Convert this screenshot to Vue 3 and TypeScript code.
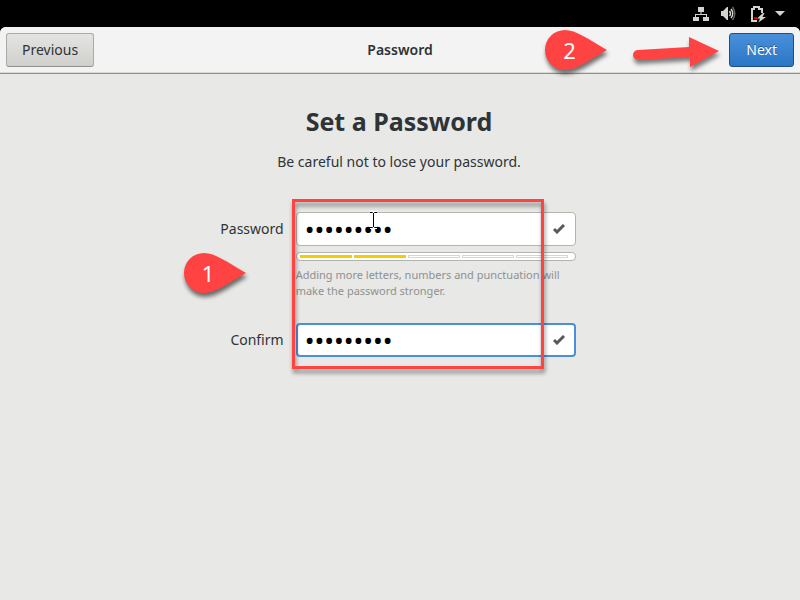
<script setup lang="ts">
import { ref } from 'vue'

const password = ref<string>('Secret123')
const confirmation = ref<string>('Secret123')
const strength = 2
const levels = [1, 2, 3, 4, 5]
</script>

<template>
  <div class="screen">
    <div class="topbar">
      <svg class="network" width="16" height="16" viewBox="0 0 16 16" aria-label="Network">
        <path d="M5 1h6v5H8.500v2H14v3h2v4h-6v-4h3V9H3v2h3v4H0v-4h2V8h5.500V6H5z" fill="#d3d3d0" />
      </svg>
      <svg class="volume" width="16" height="16" viewBox="0 0 16 16" aria-label="Volume">
        <path d="M1 5h2l4-4h1v13H7l-4-4H1z" fill="#d3d3d0" />
        <path d="M9.500 5q2 2.500 0 5M11 3q3.500 4.500 0 9" fill="none" stroke="#d3d3d0" stroke-width="1.500" />
        <path d="M12.500 1q4.500 6.500 0 13" fill="none" stroke="#66665f" stroke-width="1.500" />
      </svg>
      <svg class="battery" width="16" height="18" viewBox="0 0 16 18" aria-label="Battery">
        <path d="M7 16H2V4h2V2h5v2h3v4" fill="none" stroke="#d3d3d0" stroke-width="2" />
        <path d="M4 12h3v2H4z" fill="#e00000" />
        <path d="M13 8L7 13.500h3L8.500 17.500L16 12h-3.500L14.500 8z" fill="#d3d3d0" />
      </svg>
      <svg class="caret" width="10" height="6" viewBox="0 0 10 6" aria-label="Menu">
        <path d="M0 0h10L5 5z" fill="#d3d3d0" />
      </svg>
    </div>

    <div class="window">
      <header class="headerbar">
        <button type="button" class="btn">Previous</button>
        <div class="title">Password</div>
        <button type="button" class="btn primary">Next</button>

        <div class="marker marker-next">
          <svg width="62" height="40" viewBox="0 0 62 40">
            <path d="M20 0C31 0 43 9 62 20C43 31 31 40 20 40A20 20 0 0 1 20 0Z" fill="#ff4343" />
          </svg>
          <span>2</span>
        </div>
        <svg class="arrow" width="88" height="32" viewBox="0 0 88 32">
          <path d="M6 13L57 10V0L87 14L58 30V20L6 23A5 5 0 0 1 6 13Z" fill="#ff4343" />
        </svg>
      </header>

      <main class="page">
        <h1>Set a Password</h1>
        <p class="lead">Be careful not to lose your password.</p>

        <form class="form" @submit.prevent>
          <label for="password">Password</label>
          <div class="entry">
            <input id="password" v-model="password" type="password" />
            <svg class="check" width="12" height="10" viewBox="0 0 12 10">
              <path d="M1 5L4 8L11 1" fill="none" stroke="#555b5b" stroke-width="3" />
            </svg>
          </div>

          <div class="quality">
            <div class="levels">
              <span v-for="n in levels" :key="n" :class="{ filled: n <= strength }"></span>
            </div>
            <p class="hint">Adding more letters, numbers and punctuation will make the password stronger.</p>
          </div>

          <label for="confirm">Confirm</label>
          <div class="entry focused">
            <input id="confirm" v-model="confirmation" type="password" />
            <svg class="check" width="12" height="10" viewBox="0 0 12 10">
              <path d="M1 5L4 8L11 1" fill="none" stroke="#555b5b" stroke-width="3" />
            </svg>
          </div>

          <div class="frame"></div>
          <div class="marker marker-fields">
            <svg width="62" height="40" viewBox="0 0 62 40">
              <path d="M20 0C31 0 43 9 62 20C43 31 31 40 20 40A20 20 0 0 1 20 0Z" fill="#ff4343" />
            </svg>
            <span>1</span>
          </div>
          <svg class="ibeam" width="9" height="18" viewBox="0 0 9 18">
            <path d="M1 1.500h2.500l1 1l1-1H8M4.500 2v14M1 16.500h2.500l1-1l1 1H8" fill="none" stroke="#fff" stroke-width="3" />
            <path d="M1 1.500h2.500l1 1l1-1H8M4.500 2v14M1 16.500h2.500l1-1l1 1H8" fill="none" stroke="#000" stroke-width="1" />
          </svg>
        </form>
      </main>
    </div>
  </div>
</template>

<style>
body {
  margin: 0;
  background: #000;
}
</style>

<style scoped>
.screen {
  min-height: 100vh;
  display: flex;
  flex-direction: column;
  background: #000;
  color: #2e3436;
  font-family: "Noto Sans", "Open Sans", sans-serif;
  font-size: 14px;
  line-height: 20px;
}
.topbar {
  height: 27px;
  box-sizing: border-box;
  padding-right: 15px;
  display: flex;
  justify-content: flex-end;
  align-items: center;
}
.network {
  margin-right: 11px;
}
.volume {
  margin-right: 14px;
}
.battery {
  margin-right: 9px;
}
.window {
  flex: 1;
  display: flex;
  flex-direction: column;
  background: #e8e8e6;
  border-radius: 6px 6px 0 0;
}
.headerbar {
  position: relative;
  display: grid;
  grid-template-columns: 1fr auto 1fr;
  align-items: center;
  padding: 6px;
  background: #f3f3f3;
  border-bottom: 1px solid #8f918d;
  border-radius: 6px 6px 0 0;
  box-shadow: inset 0 -1px #d8d9d6;
}
.title {
  font-weight: 600;
}
.btn {
  height: 34px;
  padding: 0 15px;
  justify-self: start;
  border: 1px solid #a9aba7;
  border-bottom-color: #8f918d;
  border-radius: 3px;
  background: linear-gradient(#e4e4e2, #cfcfcc);
  color: #2e3436;
  font: inherit;
}
.btn.primary {
  justify-self: end;
  padding: 0 16px;
  border-color: #1c5187;
  background: linear-gradient(#4a90d9, #2a76c6);
  color: #fff;
  text-shadow: 0 -1px rgba(0, 0, 0, 0.4);
}
.page {
  display: flex;
  flex-direction: column;
  align-items: center;
  padding: 30px 22px 30px 20px;
}
h1 {
  margin: 0;
  font-size: 25px;
  line-height: 34px;
  font-weight: 700;
}
.lead {
  margin: 14px 0 40px;
}
.form {
  position: relative;
  display: grid;
  grid-template-columns: auto 280px;
  column-gap: 12px;
  align-items: center;
  margin-right: 2px;
}
label {
  text-align: right;
}
.entry {
  display: flex;
  align-items: center;
  height: 34px;
  box-sizing: border-box;
  padding: 0 10px 0 8px;
  border: 1px solid #b3b5b1;
  border-radius: 4px;
  background: #fff;
}
.entry.focused {
  padding: 0 9px 0 7px;
  border: 2px solid #4a90d9;
}
.entry input {
  flex: 1;
  min-width: 0;
  height: 30px;
  padding: 0;
  border: 0;
  outline: 0;
  background: transparent;
  color: #000;
  font-family: "Noto Sans", sans-serif;
  font-size: 26px;
  line-height: 30px;
}
.quality {
  grid-column: 2;
  padding: 6px 0 24px;
}
.levels {
  display: flex;
  gap: 2px;
  height: 9px;
  box-sizing: border-box;
  padding: 2px 7px 2px 3px;
  border: 1px solid #b3b5b1;
  border-radius: 4px;
  background: #fff;
}
.levels span {
  flex: 1;
  height: 3px;
  box-sizing: border-box;
  border: 1px solid #d6d6d3;
}
.levels .filled {
  border-color: #f5ce00;
  background: #f5ce00;
}
.hint {
  margin: 6px 0 0;
  color: #8e9190;
  font-size: 11px;
  line-height: 16px;
}
.frame {
  position: absolute;
  top: -13px;
  right: 32px;
  width: 252px;
  height: 170px;
  box-sizing: border-box;
  border: 3px solid #ff4343;
  filter: drop-shadow(1px 4px 2px rgba(0, 0, 0, 0.45));
  pointer-events: none;
}
.marker {
  position: absolute;
  width: 62px;
  height: 40px;
  color: #fff;
}
.marker svg {
  display: block;
  filter: drop-shadow(1px 4px 2px rgba(0, 0, 0, 0.55));
  overflow: visible;
}
.marker span {
  position: absolute;
  top: 0;
  left: 0;
  width: 49px;
  text-align: center;
  font-size: 22px;
  line-height: 40px;
}
.marker-next {
  top: 3px;
  right: 193px;
}
.marker-fields {
  top: 41px;
  right: 330px;
}
.arrow {
  position: absolute;
  top: 10px;
  right: 80px;
  filter: drop-shadow(1px 4px 2px rgba(0, 0, 0, 0.5));
  overflow: visible;
}
.ibeam {
  position: absolute;
  top: -1px;
  right: 198px;
}
</style>
